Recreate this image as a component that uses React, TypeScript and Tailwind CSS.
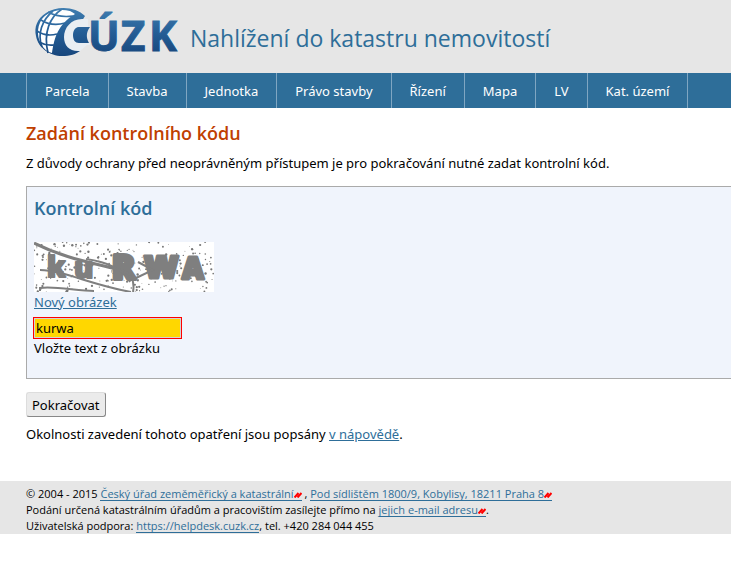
import type { ReactNode } from 'react';

const NAV = ['Parcela', 'Stavba', 'Jednotka', 'Právo stavby', 'Řízení', 'Mapa', 'LV', 'Kat. území'];

const SPECKLES = (() => {
  let seed = 41;
  const next = () => {
    seed = (seed * 1103515245 + 12345) % 2147483648;
    return seed / 2147483648;
  };
  return Array.from({ length: 260 }, () => ({ x: next() * 180, y: next() * 50, r: 0.4 + next() * 0.8 }));
})();

function Logo() {
  return (
    <svg className="overflow-visible" width="144" height="50" viewBox="0 0 144 50" role="img" aria-label="ČÚZK">
      <defs>
        <linearGradient id="blue" x1="0" y1="0" x2="0" y2="50" gradientUnits="userSpaceOnUse">
          <stop offset="0" stopColor="#3f7db0" />
          <stop offset="0.5" stopColor="#245d95" />
          <stop offset="1" stopColor="#16447a" />
        </linearGradient>
      </defs>
      <path d="M51 8C42-1 24-3 12 5C3 11 0 19 2 28C4 40 16 48 28 48C36 48 42 46 46 43Q36 30 51 8Z" fill="url(#blue)" />
      <path d="M36 3C24 0 14 4 8 11C2 20 3 31 9 39C12 43 15 44 18 45C20 33 22 19 38 8L41 6Q38 4 36 3Z" fill="#fff" />
      <g fill="none" stroke="url(#blue)" strokeWidth="1.7">
        <path d="M28 1C16 9 9 24 14 45M19 3C8 12 3 26 8 39" />
        <path d="M14 4Q25 10 39 8M7 12Q18 19 31 15M3 23Q12 29 23 26M5 34Q12 38 20 37" />
      </g>
      <path d="M54 11H48C37 11 30 20 30 29C30 38 36 44 46 43L53 37H56V35H46C42 35 40 31 40 27C40 23 42 19 46 19H54V11Z" fill="#e9eef3" />
      <path d="M56 19H45C41 19 39 23 39 27C39 32 41 35 45 35H55C52 30 52 24 56 19Z" fill="url(#blue)" />
      <text x="54 87 115" y="43" fontSize="42" fontWeight="700" fontFamily="Open Sans, sans-serif" fill="url(#blue)" stroke="url(#blue)">ÚZK</text>
    </svg>
  );
}

function Captcha() {
  return (
    <svg className="block" width="180" height="50" viewBox="0 0 180 50" role="img" aria-label="Kontrolní kód">
      <rect width="180" height="50" fill="#fff" />
      <g fill="#777">
        {SPECKLES.map((s, i) => (
          <circle key={i} cx={s.x} cy={s.y} r={s.r} />
        ))}
      </g>
      <g fill="#7f7f7f" stroke="#7f7f7f" strokeWidth="2" strokeLinejoin="round" fontFamily="Open Sans, sans-serif" fontWeight="800">
        <text x="13" y="35" fontSize="28">k</text>
        <text x="40" y="36" fontSize="29">u</text>
        <text x="78" y="37" fontSize="34" strokeWidth="4">R</text>
        <text x="110" y="36" fontSize="38" strokeWidth="3">w</text>
        <text x="148" y="37" fontSize="30" strokeWidth="3">A</text>
      </g>
      <g fill="none" stroke="#7f7f7f" strokeWidth="2">
        <path d="M0 1C28 15 50 19 86 28" strokeWidth="3" />
        <path d="M86 28C97 30 101 39 99 50" />
        <path d="M6 28C28 28 58 43 97 50M6 49V46C22 44 43 49 60 49M52 17C74 20 91 28 96 40M104 20L119 28L102 36" />
      </g>
    </svg>
  );
}

function Link({ children, external = false }: { children: ReactNode; external?: boolean }) {
  return (
    <a href="#" className="inline-block border-b border-[#2e6e99] leading-[13px] text-[#2e6e99]">
      {children}
      {external && (
        <svg className="inline align-baseline" width="8" height="7" viewBox="0 0 8 7" aria-hidden="true">
          <path d="M0.5 6.5L4.5 2M3.5 6.5L7.5 2" stroke="#f00" strokeWidth="2" />
        </svg>
      )}
    </a>
  );
}

export default function App() {
  return (
    <div className="bg-white font-['Noto_Sans',sans-serif] text-[13px] leading-5 text-black">
      <header className="flex h-[73px] items-start gap-3 bg-[#e6e6e6] pt-2 pl-[34px]">
        <Logo />
        <p className="pt-3 font-['Open_Sans',sans-serif] text-[23px] leading-9 text-[#2e6e99]">Nahlížení do katastru nemovitostí</p>
      </header>
      <nav className="bg-[#2e6e99] pl-[26px]">
        <ul className="flex border-l border-[#7fa6c2]">
          {NAV.map((item) => (
            <li key={item} className="border-r border-[#7fa6c2]">
              <a href="#" className="block px-[18px] pt-2 pb-[7px] text-white">{item}</a>
            </li>
          ))}
        </ul>
      </nav>
      <main className="pl-[26px]">
        <h1 className="pt-[11px] font-['Open_Sans',sans-serif] text-lg leading-7 font-semibold text-[#c04000]">Zadání kontrolního kódu</h1>
        <p className="pt-[6px]">Z důvody ochrany před neoprávněným přístupem je pro pokračování nutné zadat kontrolní kód.</p>
        <section className="mt-[13px] border border-r-0 border-[#aaa] bg-[#f0f4fc] px-[7px] pt-[7px] pb-5">
          <h2 className="pb-5 font-['Open_Sans',sans-serif] text-lg leading-7 font-semibold text-[#2e6e99]">Kontrolní kód</h2>
          <Captcha />
          <a href="#" className="text-[#2e6e99] underline">Nový obrázek</a>
          <input
            id="code"
            defaultValue="kurwa"
            className="mt-[5px] -ml-px block h-[22px] w-[149px] border border-[#f00] bg-[#ffd700] px-0.5 inset-shadow-[0_0_0_1px_#d3d3d3]"
          />
          <label htmlFor="code" className="block leading-[19px]">Vložte text z obrázku</label>
        </section>
        <button className="mt-[13px] h-[25px] rounded-[3px] border border-[#ddd] border-r-[#888] border-b-[#888] bg-[#ebebeb] px-[5px]">Pokračovat</button>
        <p className="pt-[7px]">
          Okolnosti zavedení tohoto opatření jsou popsány <a href="#" className="text-[#2e6e99] underline">v nápovědě</a>.
        </p>
      </main>
      <footer className="mt-[37px] bg-[#e6e6e6] pt-[5px] font-['Open_Sans',sans-serif] pl-[26px] text-[11px] leading-4">
        <p>© 2004 - 2015 <Link external>Český úřad zeměměřický a katastrální</Link> , <Link external>Pod sídlištěm 1800/9, Kobylisy, 18211 Praha 8</Link></p>
        <p>Podání určená katastrálním úřadům a pracovištím zasílejte přímo na <Link external>jejich e-mail adresu</Link>.</p>
        <p>Uživatelská podpora: <Link>https://helpdesk.cuzk.cz</Link>, tel. +420 284 044 455</p>
      </footer>
    </div>
  );
}
